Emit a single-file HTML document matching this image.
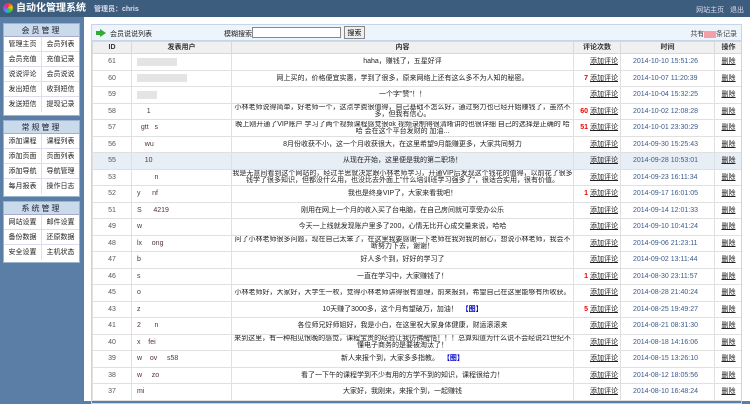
<!DOCTYPE html>
<html><head><meta charset="utf-8"><style>
*{margin:0;padding:0;box-sizing:border-box}
body{width:750px;height:401px;overflow:hidden;background:#5a7ea6;font-family:"Liberation Sans","Noto Sans CJK SC",sans-serif;font-size:8px;color:#222;position:relative}
#top{position:absolute;left:0;top:0;width:750px;height:17px;background:#3d5d7e;color:#fff}
#logo{position:absolute;left:3px;top:3px;width:10px;height:10px;border-radius:50%;background:conic-gradient(#e33,#fb0,#3c3,#39f,#c3c,#e33)}
#title{position:absolute;left:16px;top:2px;font-size:10px;font-weight:bold;line-height:13px}
#admin{position:absolute;left:94px;top:4px;font-size:7px;font-weight:bold;color:#dde}
#links{position:absolute;right:6px;top:5px;font-size:7px;color:#dde}
#side{position:absolute;left:0;top:17px;width:84px;height:384px;background:#5a7ea6}
.box{position:absolute;left:3px;width:77px;background:#fff;border:1px solid #9bb3cc}
.box h3{height:13px;line-height:13px;text-align:center;background:#c9daeb;font-size:8px;font-weight:normal;letter-spacing:2px;color:#223;border-bottom:1px solid #aac}
.box .r{display:flex;height:15px;line-height:15px;border-bottom:1px solid #dde}
.box .r span{flex:1;text-align:center;font-size:7px}
.box .r span:first-child{border-right:1px solid #dde}
#main{position:absolute;left:84px;top:17px;width:666px;height:384px;background:#fff}
#wrap{position:absolute;left:7px;top:7px;width:651px;height:380px;border:1px solid #c5d6e8;overflow:hidden}
#bar{height:16px;background:#eef4fb;border-bottom:1px solid #c5d6e8;position:relative;font-size:7px}
#bar .arr{position:absolute;left:8px;top:4px;width:0;height:0;border-left:6px solid #3a3;border-top:4px solid transparent;border-bottom:4px solid transparent}
#bar .arr:before{content:"";position:absolute;left:-10px;top:-2px;width:4px;height:4px;background:#3a3}
#bar .t{position:absolute;left:18px;top:4px}
#bar .s{position:absolute;left:132px;top:4px}
#bar input{position:absolute;left:160px;top:2px;width:89px;height:11px;border:1px solid #888}
#bar button{position:absolute;left:252px;top:1px;width:21px;height:13px;font-size:7px;border:1px solid #888;background:#eee}
#bar .c{position:absolute;right:4px;top:4px;color:#444}
table{border-collapse:collapse;table-layout:fixed;width:650px}
td,th{border:1px solid #e0e0e0;text-align:center;height:16.5px;padding:0;overflow:hidden;line-height:7px;font-size:7px}
td>div{max-height:15px;overflow:hidden}
th{height:12px;background:#f0f0f0;font-weight:bold;color:#333;border-color:#d8d8d8}
td:first-child{color:#555}
td.u{text-align:left;padding-left:5px;color:#533}
td.t{color:#3a5a8a;text-align:left;padding-left:12px}
td.n{text-align:right;padding-right:2px}
td.n b{color:#e00;margin-right:2px}
u{color:#222}
tr.h td{background:#e8eef6}
.blur{display:inline-block;width:40px;height:8px;background:#e4e4e4;vertical-align:middle}
</style></head><body>
<div id="top"><div id="logo"></div><div id="title">自动化管理系统</div><div id="admin">管理员：chris</div><div id="links">网站主页 &nbsp; 退出</div></div>
<div id="side">
<div class="box" style="top:6px;height:93px"><h3>会员管理</h3>
<div class="r"><span>管理主页</span><span>会员列表</span></div>
<div class="r"><span>会员充值</span><span>充值记录</span></div>
<div class="r"><span>说说评论</span><span>会员说说</span></div>
<div class="r"><span>发出短信</span><span>收到短信</span></div>
<div class="r" style="border:0"><span>发送短信</span><span>提现记录</span></div></div>
<div class="box" style="top:103px;height:77px"><h3>常规管理</h3>
<div class="r"><span>添加课程</span><span>课程列表</span></div>
<div class="r"><span>添加页面</span><span>页面列表</span></div>
<div class="r"><span>添加导航</span><span>导航管理</span></div>
<div class="r" style="border:0"><span>每月报表</span><span>操作日志</span></div></div>
<div class="box" style="top:184px;height:62px"><h3>系统管理</h3>
<div class="r"><span>网站设置</span><span>邮件设置</span></div>
<div class="r"><span>备份数据</span><span>还原数据</span></div>
<div class="r" style="border:0"><span>安全设置</span><span>主机状态</span></div></div>
</div>
<div id="main"><div id="wrap">
<div id="bar"><div class="arr"></div><span class="t">会员说说列表</span><span class="s">模糊搜索</span><input><button>搜索</button><span class="c">共有<span style="background:#f4a0a8;color:#f4a0a8">000</span>条记录</span></div>
<table>
<colgroup><col style="width:39px"><col style="width:100px"><col style="width:342px"><col style="width:47px"><col style="width:94px"><col style="width:28px"></colgroup>
<tr><th>ID</th><th>发表用户</th><th>内容</th><th>评论次数</th><th>时间</th><th>操作</th></tr>
<tr><td>61</td><td class="u"><span class="blur"></span></td><td>haha，赚钱了，五星好评</td><td class="n"><u>添加评论</u></td><td class="t">2014-10-10 15:51:26</td><td><u>删除</u></td></tr>
<tr><td>60</td><td class="u"><span class="blur" style="width:50px"></span></td><td>网上买的，价格便宜实惠，学到了很多，原来网络上还有这么多不为人知的秘密。</td><td class="n"><b>7</b><u>添加评论</u></td><td class="t">2014-10-07 11:20:39</td><td><u>删除</u></td></tr>
<tr><td>59</td><td class="u"><span class="blur" style="width:20px"></span></td><td>一个字"赞"！！</td><td class="n"><u>添加评论</u></td><td class="t">2014-10-04 15:32:25</td><td><u>删除</u></td></tr>
<tr><td>58</td><td class="u">&nbsp;&nbsp;&nbsp;&nbsp;&nbsp;1</td><td><div>小林老师说得简单，好老师一个，这点学费很值得，自己基础不怎么好，通过努力也已经开始赚钱了，虽然不多，但我有信心。</div></td><td class="n"><b>60</b><u>添加评论</u></td><td class="t">2014-10-02 12:08:28</td><td><u>删除</u></td></tr>
<tr><td>57</td><td class="u">&nbsp;&nbsp;gtt&nbsp;&nbsp;&nbsp;s</td><td><div>晚上刚开通了VIP账户 学习了两个视频课程感觉很ok 视频录制得很清晰讲的也很详细 自己的选择是正确的 哈哈 会在这个平台发财的 加油...</div></td><td class="n"><b>51</b><u>添加评论</u></td><td class="t">2014-10-01 23:30:29</td><td><u>删除</u></td></tr>
<tr><td>56</td><td class="u">&nbsp;&nbsp;&nbsp;&nbsp;wu</td><td>8月份收获不小，这一个月收获很大，在这里希望9月能赚更多，大家共同努力</td><td class="n"><u>添加评论</u></td><td class="t">2014-09-30 15:25:43</td><td><u>删除</u></td></tr>
<tr class="h"><td>55</td><td class="u">&nbsp;&nbsp;&nbsp;&nbsp;10</td><td>从现在开始，这里便是我的第二职场！</td><td class="n"><u>添加评论</u></td><td class="t">2014-09-28 10:53:01</td><td><u>删除</u></td></tr>
<tr><td>53</td><td class="u">&nbsp;&nbsp;&nbsp;&nbsp;&nbsp;&nbsp;&nbsp;&nbsp;&nbsp;n</td><td><div>我是无意间看到这个网站的，经过半思就决定跟小林老师学习，开通VIP后发现这个钱花的值得，以前花了很多钱学了很多知识，但都没什么用，也没比去外面上"什么培训班学习强多了"，很适合实用，很有价值。</div></td><td class="n"><u>添加评论</u></td><td class="t">2014-09-23 16:11:34</td><td><u>删除</u></td></tr>
<tr><td>52</td><td class="u">y&nbsp;&nbsp;&nbsp;&nbsp;&nbsp;&nbsp;nf</td><td>我也是终身VIP了，大家来看我吧！</td><td class="n"><b>1</b><u>添加评论</u></td><td class="t">2014-09-17 16:01:05</td><td><u>删除</u></td></tr>
<tr><td>51</td><td class="u">S&nbsp;&nbsp;&nbsp;&nbsp;&nbsp;&nbsp;4219</td><td>刚用在网上一个月的收入买了台电脑，在自己房间就可享受办公乐</td><td class="n"><u>添加评论</u></td><td class="t">2014-09-14 12:01:33</td><td><u>删除</u></td></tr>
<tr><td>49</td><td class="u">w</td><td>今天一上线就发现账户里多了200，心情无比开心成交量来说，哈哈</td><td class="n"><u>添加评论</u></td><td class="t">2014-09-10 10:41:24</td><td><u>删除</u></td></tr>
<tr><td>48</td><td class="u">lx&nbsp;&nbsp;&nbsp;&nbsp;&nbsp;ong</td><td><div>问了小林老师很多问题，现在自己太笨了，在这里我要感谢一下老师在我对我的耐心，想说小林老师，我会不断努力下去，谢谢！</div></td><td class="n"><u>添加评论</u></td><td class="t">2014-09-06 21:23:11</td><td><u>删除</u></td></tr>
<tr><td>47</td><td class="u">b</td><td>好人多个到，好好的学习了</td><td class="n"><u>添加评论</u></td><td class="t">2014-09-02 13:11:44</td><td><u>删除</u></td></tr>
<tr><td>46</td><td class="u">s</td><td>一直在学习中，大家赚钱了！</td><td class="n"><b>1</b><u>添加评论</u></td><td class="t">2014-08-30 23:11:57</td><td><u>删除</u></td></tr>
<tr><td>45</td><td class="u">o</td><td><div>小林老师好，大家好，大学生一枚，觉得小林老师讲得很有道理，前来报到，希望自己在这里能够有所收获。</div></td><td class="n"><u>添加评论</u></td><td class="t">2014-08-28 21:40:24</td><td><u>删除</u></td></tr>
<tr><td>43</td><td class="u">z</td><td>10天赚了3000多，这个月有望破万，加油！ &nbsp;<span style="color:#00c;font-weight:bold">【图】</span></td><td class="n"><b>5</b><u>添加评论</u></td><td class="t">2014-08-25 19:49:27</td><td><u>删除</u></td></tr>
<tr><td>41</td><td class="u">2&nbsp;&nbsp;&nbsp;&nbsp;&nbsp;&nbsp;&nbsp;n</td><td>各位师兄好师姐好，我是小白，在这里祝大家身体健康，财运滚滚来</td><td class="n"><u>添加评论</u></td><td class="t">2014-08-21 08:31:30</td><td><u>删除</u></td></tr>
<tr><td>40</td><td class="u">x&nbsp;&nbsp;&nbsp;&nbsp;fei</td><td><div>来到这里，有一种相见恨晚的感觉，课程宝贵的经验让我彷彿醒悟！！！总算知道为什么说不会经说21世纪不懂电子商务的是要被淘汰了！</div></td><td class="n"><u>添加评论</u></td><td class="t">2014-08-18 14:16:06</td><td><u>删除</u></td></tr>
<tr><td>39</td><td class="u">w&nbsp;&nbsp;&nbsp;&nbsp;ov&nbsp;&nbsp;&nbsp;&nbsp;&nbsp;s58</td><td>新人来报个到，大家多多指教。 &nbsp;<span style="color:#00c;font-weight:bold">【图】</span></td><td class="n"><u>添加评论</u></td><td class="t">2014-08-15 13:26:10</td><td><u>删除</u></td></tr>
<tr><td>38</td><td class="u">w&nbsp;&nbsp;&nbsp;&nbsp;&nbsp;zo</td><td>看了一下午的课程学到不少有用的方学不到的知识，课程很给力！</td><td class="n"><u>添加评论</u></td><td class="t">2014-08-12 18:05:56</td><td><u>删除</u></td></tr>
<tr><td>37</td><td class="u">mi</td><td>大家好，我刚来，来报个到，一起赚钱</td><td class="n"><u>添加评论</u></td><td class="t">2014-08-10 16:48:24</td><td><u>删除</u></td></tr>
</table>
</div></div>
</body></html>
